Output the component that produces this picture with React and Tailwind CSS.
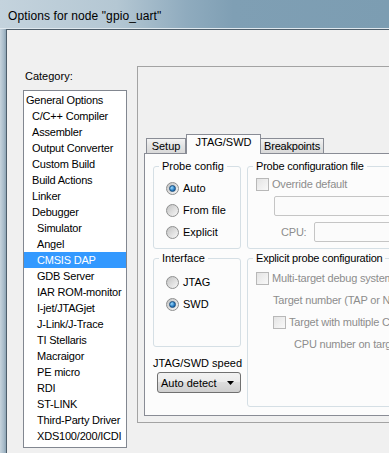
import React from "react";

const items = [
  ["General Options", 0],
  ["C/C++ Compiler", 1],
  ["Assembler", 1],
  ["Output Converter", 1],
  ["Custom Build", 1],
  ["Build Actions", 1],
  ["Linker", 1],
  ["Debugger", 1],
  ["Simulator", 2],
  ["Angel", 2],
  ["CMSIS DAP", 2],
  ["GDB Server", 2],
  ["IAR ROM-monitor", 2],
  ["I-jet/JTAGjet", 2],
  ["J-Link/J-Trace", 2],
  ["TI Stellaris", 2],
  ["Macraigor", 2],
  ["PE micro", 2],
  ["RDI", 2],
  ["ST-LINK", 2],
  ["Third-Party Driver", 2],
  ["XDS100/200/ICDI", 2],
];
const indent = ["pl-[2px]", "pl-[8px]", "pl-[13px]"];

const Radio = ({ checked }) => (
  <span className="w-[13px] h-[13px] rounded-full border border-[#8e8f8f] bg-[linear-gradient(135deg,#c2c2c2,#f8f8f8)] flex items-center justify-center shrink-0">
    {checked && (
      <span className="w-[7px] h-[7px] rounded-full border border-[#1c4f7d] bg-[radial-gradient(circle_at_35%_35%,#9edcff,#2579c0_60%,#0e4b8a)]" />
    )}
  </span>
);

const Check = () => (
  <span className="w-[13px] h-[13px] border border-[#b8b8b8] bg-[linear-gradient(135deg,#e4e4e4,#f9f9f9)] shrink-0" />
);

const RadioRow = ({ checked, label }) => (
  <div className="h-[22px] flex items-center pl-[12px] gap-[4px] leading-[14px]">
    <Radio checked={checked} />
    <span>{label}</span>
  </div>
);

export default function App() {
  return (
    <div className="w-[389px] h-[453px] overflow-hidden flex flex-col bg-[#a9bccb] font-['Liberation_Sans',Arial,sans-serif] text-[11px] text-black">
      <div className="h-[28px] shrink-0 pl-[8px] pt-[9px] leading-[14px] text-[12px] tracking-[0.1px] bg-[linear-gradient(to_right,#c4d3dd_0%,#b4c7d3_30%,#8fabbe_48%,#7f9fb4_60%,#7c9db2_100%)]">
        Options for node "gpio_uart"
      </div>
      <div className="h-[1px] shrink-0 bg-[#dfe8ee]" />
      <div className="flex-1 flex min-h-0">
        <div className="w-[6px] shrink-0 bg-[linear-gradient(to_right,#c6d3dc,#aabdcb_60%,#8ea5b5)]" />
        <div className="flex-1 flex items-start border-l border-t border-[#4e5e6b] bg-[#f0f0f0] pl-[16px] min-w-0">
          {/* Left column */}
          <div className="w-[104px] shrink-0 mt-[39px]">
            <div className="pl-[2px] leading-[14px]">Category:</div>
            <div className="mt-[7px] h-[358px] border border-[#828790] bg-white pt-[1px] tracking-[-0.2px]">
              {items.map(([label, lvl]) => (
                <div
                  key={label}
                  className={
                    "h-[16px] leading-[16px] whitespace-nowrap " +
                    indent[lvl] +
                    (label === "CMSIS DAP" ? " bg-[#3399ff] text-white" : "")
                  }
                >
                  {label}
                </div>
              ))}
            </div>
          </div>

          {/* Right frame */}
          <div className="ml-[10px] mt-[36px] h-[357px] w-[320px] shrink-0 border border-[#a3a3a3] pt-[67px] pl-[6px] pb-[6px] flex flex-col">
            <div className="h-[19px] flex items-end pl-[2px] shrink-0">
              <div className="w-[40px] h-[15px] border-t border-l border-r border-[#898c95] bg-[linear-gradient(to_bottom,#f3f3f3,#e3e3e3_50%,#d9d9d9)] text-center leading-[14px]">
                Setup
              </div>
              <div className="relative z-10 w-[75px] h-[20px] -mb-[1px] border-t border-l border-r border-[#898c95] bg-[#fcfcfc] text-center leading-[14px]">
                JTAG/SWD
              </div>
              <div className="w-[63px] h-[15px] border-t border-r border-[#898c95] bg-[linear-gradient(to_bottom,#f3f3f3,#e3e3e3_50%,#d9d9d9)] text-center leading-[14px] tracking-[-0.2px]">
                Breakpoints
              </div>
            </div>
            <div className="flex-1 border border-[#898c95] bg-[#fcfcfc] pl-[8px] pt-[5px] flex items-start">
              {/* left column of panel */}
              <div className="w-[88px] shrink-0 flex flex-col">
                <fieldset className="h-[90px] border border-[#d5dfe5] rounded-[3px]">
                  <legend className="ml-[5px] px-[3px] leading-[14px]">Probe config</legend>
                  <div className="mt-[4px]">
                    <RadioRow checked label="Auto" />
                    <RadioRow label="From file" />
                    <RadioRow label="Explicit" />
                  </div>
                </fieldset>
                <fieldset className="mt-[2px] h-[96px] border border-[#d5dfe5] rounded-[3px]">
                  <legend className="ml-[5px] px-[3px] leading-[14px]">Interface</legend>
                  <div className="mt-[6px]">
                    <RadioRow label="JTAG" />
                    <RadioRow checked label="SWD" />
                  </div>
                </fieldset>
                <div className="mt-[9px] leading-[14px] whitespace-nowrap">JTAG/SWD speed</div>
                <div className="ml-[4px] mt-[2px] w-[84px] h-[21px] rounded-[3px] border border-[#707070] bg-[linear-gradient(to_bottom,#f2f2f2_0%,#ebebeb_45%,#dddddd_50%,#cfcfcf_100%)] flex items-center justify-between pl-[3px] pr-[6px] leading-[14px]">
                  <span>Auto detect</span>
                  <svg width="7" height="4" viewBox="0 0 7 4">
                    <path d="M0 0H7L3.5 4Z" fill="#000" />
                  </svg>
                </div>
              </div>

              {/* right column of panel */}
              <div className="ml-[6px] w-[220px] shrink-0 flex flex-col text-[#8d8d8d] whitespace-nowrap tracking-[-0.2px]">
                <fieldset className="h-[90px] border border-[#d5dfe5] rounded-[3px]">
                  <legend className="ml-[5px] px-[3px] leading-[14px] text-black">Probe configuration file</legend>
                  <div className="mt-[4px] h-[14px] flex items-center pl-[8px] gap-[3px] leading-[14px]">
                    <Check />
                    <span>Override default</span>
                  </div>
                  <div className="mt-[5px] ml-[26px] h-[20px] border border-[#c5c5c5] rounded-[2px] bg-[#fbfbfb]" />
                  <div className="mt-[6px] h-[20px] flex items-center pl-[33px] leading-[14px]">
                    <span>CPU:</span>
                    <div className="ml-[8px] flex-1 h-[20px] border border-[#c5c5c5] rounded-[2px] bg-[#fbfbfb]" />
                  </div>
                </fieldset>
                <fieldset className="mt-[2px] h-[156px] border border-[#d5dfe5] rounded-[3px]">
                  <legend className="ml-[5px] px-[3px] leading-[14px] text-black">Explicit probe configuration</legend>
                  <div className="mt-[2px] leading-[14px]">
                    <div className="h-[22px] flex items-center pl-[8px] gap-[3px]">
                      <Check />
                      <span>Multi-target debug system</span>
                    </div>
                    <div className="h-[22px] flex items-center pl-[25px]">Target number (TAP or No.)</div>
                    <div className="h-[22px] flex items-center pl-[25px] gap-[3px]">
                      <Check />
                      <span>Target with multiple CPUs</span>
                    </div>
                    <div className="h-[22px] flex items-center pl-[46px]">CPU number on target</div>
                  </div>
                </fieldset>
              </div>
            </div>
          </div>
        </div>
      </div>
    </div>
  );
}
